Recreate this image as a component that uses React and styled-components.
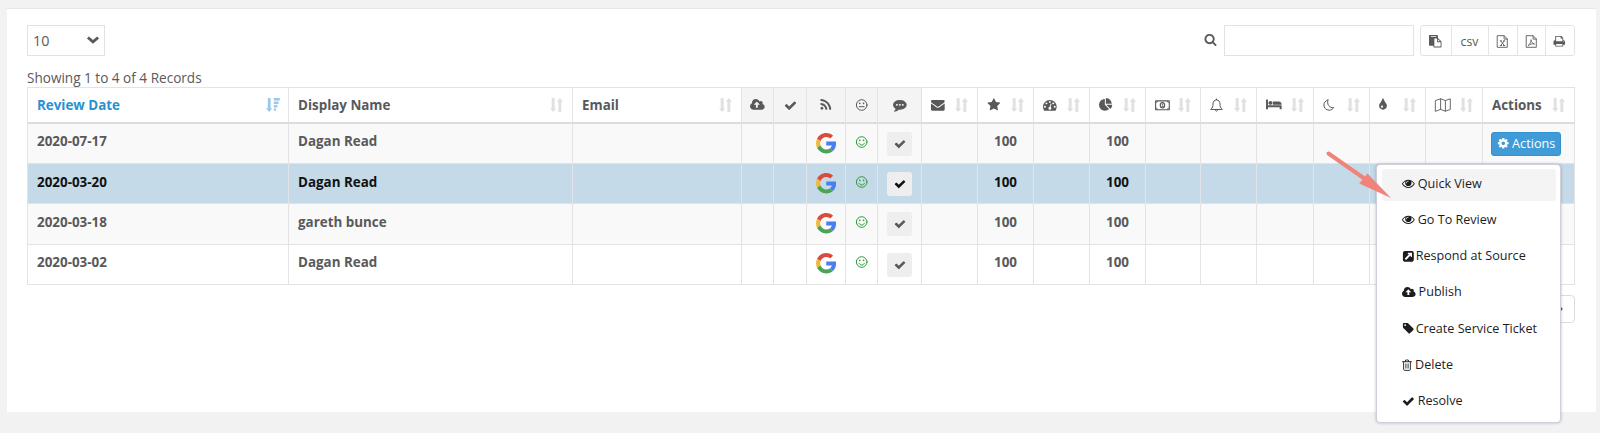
import React from "react";
import styled, { createGlobalStyle, css } from "styled-components";

const GlobalStyle = createGlobalStyle`
  * { box-sizing: border-box; }
  html, body { margin: 0; padding: 0; }
  body {
    background: #f2f2f2;
    color: #58595b;
    font-family: "Open Sans", sans-serif;
    font-size: 13.4px;
    height: 433px;
    overflow: hidden;
  }
`;

/* ---------- icons ---------- */

const PATHS = {
  check: [1792, "M1671 566q0 40-28 68l-724 724-136 136q-28 28-68 28t-68-28l-136-136-362-362q-28-28-28-68t28-68l136-136q28-28 68-28t68 28l294 295 656-657q28-28 68-28t68 28l136 136q28 28 28 68z"],
  cloud: [1920, "M1280 864q0-14-9-23l-352-352q-9-9-23-9t-23 9l-351 351q-10 12-10 24 0 14 9 23t23 9h224v352q0 13 9.5 22.5t22.5 9.5h192q13 0 22.5-9.5t9.5-22.5v-352h224q13 0 22.5-9.5t9.5-22.5zm640 288q0 159-112.5 271.5t-271.5 112.5h-1088q-185 0-316.5-131.5t-131.5-316.5q0-130 70-240t188-165q-2-30-2-43 0-212 150-362t362-150q156 0 285.5 87t188.5 231q71-62 166-62 106 0 181 75t75 181q0 76-41 138 130 31 213.5 135.5t83.5 238.5z"],
  star: [1792, "M1728 647q0 22-26 48l-363 354 86 500q1 7 1 20 0 21-10.5 35.5t-30.5 14.5q-19 0-40-12l-449-236-449 236q-22 12-40 12-21 0-31.5-14.5t-10.5-35.5q0-6 2-20l86-500-364-354q-25-27-25-48 0-37 56-46l502-73 225-455q19-41 49-41t49 41l225 455 502 73q56 9 56 46z"],
  cog: [1792, "M1152 896q0-106-75-181t-181-75-181 75-75 181 75 181 181 75 181-75 75-181zm512-109v222q0 12-8 23t-20 13l-185 28q-19 54-39 91 35 50 107 138 10 12 10 25t-9 23q-27 37-99 108t-94 71q-12 0-26-9l-138-108q-44 23-91 38-16 136-29 186-7 28-36 28h-222q-14 0-24.5-8.5t-11.5-21.5l-28-184q-49-16-90-37l-141 107q-10 9-25 9-14 0-25-11-126-114-165-168-7-10-7-23 0-12 8-23 15-21 51-66.5t54-70.5q-27-50-41-99l-183-27q-13-2-21-12.5t-8-23.5v-222q0-12 8-23t19-13l186-28q14-46 39-92-40-57-107-138-10-12-10-24 0-10 9-23 26-36 98.5-107.5t94.5-71.5q13 0 26 10l138 107q44-23 91-38 16-136 29-186 7-28 36-28h222q14 0 24.5 8.5t11.5 21.5l28 184q49 16 90 37l142-107q9-9 24-9 13 0 25 10 129 119 165 170 7 8 7 22 0 12-8 23-15 21-51 66.5t-54 70.5q26 50 41 98l183 28q13 2 21 12.5t8 23.5z"],
  search: [1792, "M1216 832q0-185-131.5-316.5t-316.5-131.5-316.5 131.5-131.5 316.5 131.5 316.5 316.5 131.5 316.5-131.5 131.5-316.5zm512 832q0 52-38 90t-90 38q-54 0-90-38l-343-342q-179 124-399 124-143 0-273.5-55.5t-225-150-150-225-55.5-273.5 55.5-273.5 150-225 225-150 273.5-55.5 273.5 55.5 225 150 150 225 55.5 273.5q0 220-124 399l343 343q37 37 37 90z"],
  envelope: [1792, "M1792 710v794q0 66-47 113t-113 47h-1472q-66 0-113-47t-47-113v-794q44 49 101 87 362 246 497 345 57 42 92.5 65.5t94.5 48 110 24.5h2q51 0 110-24.5t94.5-48 92.5-65.5q170-123 498-345 57-39 100-87zm0-294q0 79-49 151t-122 123q-376 261-468 325-10 7-42.5 31t-54 38.5-52 32.5-57.5 27-50 9h-2q-23 0-50-9t-57.5-27-52-32.5-54-38.5-42.5-31q-91-64-262-182.5t-205-142.5q-62-42-117-115.5t-55-136.5q0-78 41.5-130t118.5-52h1472q65 0 112.5 47t47.5 113z"],
  rss: [1792, "M576 1344q0 80-56 136t-136 56-136-56-56-136 56-136 136-56 136 56 56 136zm512 123q2 28-17 48-18 21-47 21h-135q-25 0-43-16.5t-20-41.5q-22-229-184.5-391.5t-391.5-184.5q-25-2-41.5-20t-16.5-43v-135q0-29 21-47 17-17 43-17h5q160 13 306 80.5t259 181.5q114 113 181.5 259t80.5 306zm512 2q2 27-18 47-18 20-46 20h-143q-26 0-44.5-17.5t-19.5-42.5q-12-215-101-408.5t-231.5-336-336-231.5-408.5-102q-25-1-42.5-19.5t-17.5-43.5v-143q0-28 20-46 18-18 44-18h3q262 13 501.5 120t425.5 294q187 186 294 425.5t120 501.5z"],
  eye: [1792, "M1664 960q-152-236-381-353 61 104 61 225 0 185-131.5 316.5t-316.5 131.5-316.5-131.5-131.5-316.5q0-121 61-225-229 117-381 353 133 205 333.5 326.5t434.5 121.5 434.5-121.5 333.5-326.5zm-720-384q0-20-14-34t-34-14q-125 0-214.5 89.5t-89.5 214.5q0 20 14 34t34 14 34-14 14-34q0-86 61-147t147-61q20 0 34-14t14-34zm848 384q0 34-20 69-140 230-376.5 368.5t-499.5 138.5-499.5-139-376.5-368q-20-35-20-69t20-69q140-229 376.5-368t499.5-139 499.5 139 376.5 368q20 35 20 69z"],
  tag: [1792, "M576 448q0-53-37.5-90.5t-90.5-37.5-90.5 37.5-37.5 90.5 37.5 90.5 90.5 37.5 90.5-37.5 37.5-90.5zm1067 576q0 53-37 90l-491 492q-39 37-91 37-53 0-90-37l-715-716q-38-37-64.5-101t-26.5-117v-416q0-52 38-90t90-38h416q53 0 117 26.5t102 64.5l715 714q37 39 37 91z"],
  pie: [1792, "M768 890l546 546q-106 108-247.5 168t-298.5 60q-209 0-385.5-103t-279.5-279.5-103-385.5 103-385.5 279.5-279.5 385.5-103v762zm187 6h773q0 157-60 298.5t-168 247.5zm709-128h-768v-768q209 0 385.5 103t279.5 279.5 103 385.5z"],
  dashboard: [1792, "M384 1152q0-53-37.5-90.5t-90.5-37.5-90.5 37.5-37.5 90.5 37.5 90.5 90.5 37.5 90.5-37.5 37.5-90.5zm192-448q0-53-37.5-90.5t-90.5-37.5-90.5 37.5-37.5 90.5 37.5 90.5 90.5 37.5 90.5-37.5 37.5-90.5zm428 481l101-382q6-26-7.5-48.5t-38.5-29.5-48 6.5-30 39.5l-101 382q-60 5-107 43.5t-63 98.5q-20 77 20 146t117 89 146-20 89-117q16-60-6-117t-72-91zm660-33q0-53-37.5-90.5t-90.5-37.5-90.5 37.5-37.5 90.5 37.5 90.5 90.5 37.5 90.5-37.5 37.5-90.5zm-640-640q0-53-37.5-90.5t-90.5-37.5-90.5 37.5-37.5 90.5 37.5 90.5 90.5 37.5 90.5-37.5 37.5-90.5zm448 192q0-53-37.5-90.5t-90.5-37.5-90.5 37.5-37.5 90.5 37.5 90.5 90.5 37.5 90.5-37.5 37.5-90.5zm320 448q0 261-141 483-19 29-54 29h-1402q-35 0-54-29-141-221-141-483 0-182 71-348t191-286 286-191 348-71 348 71 286 191 191 286 71 348z"],
  bed: [2048, "M256 960h1728q26 0 45 19t19 45v448h-256v-256h-1536v256h-256v-1216q0-26 19-45t45-19h128q26 0 45 19t19 45v704zm576-320q0-106-75-181t-181-75-181 75-75 181 75 181 181 75 181-75 75-181zm1216 256v-64q0-159-112.5-271.5t-271.5-112.5h-704q-26 0-45 19t-19 45v384h1152z"],
  tint: [1792, "M896 1152q0-36-20-69-1-1-15.5-22.5t-25.5-38-25-44-21-50.5q-4-16-21-16t-21 16q-7 23-21 50.5t-25 44-25.5 38-15.5 22.5q-20 33-20 69 0 53 37.5 90.5t90.5 37.5 90.5-37.5 37.5-90.5zm512-128q0 212-150 362t-362 150-362-150-150-362q0-145 81-275 6-9 62.5-90.5t101-151 99.5-178 83-201.5q9-30 34-47t51-17 51.5 17 33.5 47q28 93 83 201.5t99.5 178 101 151 62.5 90.5q81 127 81 275z"],
  comment: [1792, "M640 896q0-53-37.5-90.5t-90.5-37.5-90.5 37.5-37.5 90.5 37.5 90.5 90.5 37.5 90.5-37.5 37.5-90.5zm384 0q0-53-37.5-90.5t-90.5-37.5-90.5 37.5-37.5 90.5 37.5 90.5 90.5 37.5 90.5-37.5 37.5-90.5zm384 0q0-53-37.5-90.5t-90.5-37.5-90.5 37.5-37.5 90.5 37.5 90.5 90.5 37.5 90.5-37.5 37.5-90.5zM1792 896q0 174-120 321.5t-326 233-450 85.5q-70 0-145-8-198 175-460 242-49 14-114 22-17 2-30.5-9t-17.5-29v-1q-3-4-.5-12t2-10 4.5-9.5l6-9 7-8.5 8-9q7-8 31-34.5t34.5-38 31-39.5 32.5-51 27-59 26-76q-157-89-247.5-220t-90.5-281q0-130 71-248.5t191-204.5 286-136.5 348-50.5 348 50.5 286 136.5 191 204.5 71 248.5z"],
  external: [1792, "M1408 928v-480q0-26-19-45t-45-19h-480q-42 0-59 39-17 41 14 70l144 144-534 534q-19 19-19 45t19 45l102 102q19 19 45 19t45-19l534-534 144 144q18 19 45 19 12 0 25-5 39-17 39-59zm256-512v960q0 119-84.5 203.5t-203.5 84.5h-960q-119 0-203.5-84.5t-84.5-203.5v-960q0-119 84.5-203.5t203.5-84.5h960q119 0 203.5 84.5t84.5 203.5z"],
  paste: [1792, "M768 1664h896v-640h-416q-40 0-68-28t-28-68v-416h-384v1152zm256-1440v-64q0-13-9.5-22.5t-22.5-9.5h-704q-13 0-22.5 9.5t-9.5 22.5v64q0 13 9.5 22.5t22.5 9.5h704q13 0 22.5-9.5t9.5-22.5zm256 672h299l-299-299v299zm512 128v672q0 40-28 68t-68 28h-960q-40 0-68-28t-28-68v-160h-544q-40 0-68-28t-28-68v-1344q0-40 28-68t68-28h1088q40 0 68 28t28 68v328q21 13 36 28l408 408q28 28 48 76t20 88z"],
  print: [1792, "M448 1536h896v-256h-896v256zm0-640h896v-384h-160q-40 0-68-28t-28-68v-160h-640v640zm1152 64q0-26-19-45t-45-19-45 19-19 45 19 45 45 19 45-19 19-45zm128 0v416q0 13-9.5 22.5t-22.5 9.5h-224v160q0 40-28 68t-68 28h-960q-40 0-68-28t-28-68v-160h-224q-13 0-22.5-9.5t-9.5-22.5v-416q0-79 56.5-135.5t135.5-56.5h64v-544q0-40 28-68t68-28h672q40 0 88 20t76 48l152 152q28 28 48 76t20 88v256h64q79 0 135.5 56.5t56.5 135.5z"],
};

const Svg = styled.svg`
  display: block;
  flex: none;
  overflow: visible;
`;

function Glyph({ name, size = 13.7 }) {
  const [w, d] = PATHS[name];
  return (
    <Svg width={(size * w) / 1792} height={size} viewBox={`0 0 ${w} 1792`} fill="currentColor">
      <path fillRule="evenodd" d={d} />
    </Svg>
  );
}

function Line({ w = 14, h = 14, sw = 1, children }) {
  return (
    <Svg width={w} height={h} viewBox={`0 0 ${w} ${h}`} fill="none" stroke="currentColor"
      strokeWidth={sw} strokeLinecap="round" strokeLinejoin="round">
      {children}
    </Svg>
  );
}

const Face = ({ happy }) => (
  <Line w={12} h={12}>
    <circle cx="5.700" cy="6" r="5.300" />
    <g fill="currentColor" stroke="none">
      <circle cx="3.800" cy="4.400" r="0.800" />
      <circle cx="7.600" cy="4.400" r="0.800" />
    </g>
    {happy ? <path d="M3 7.200c.5 1.200 1.500 1.800 2.700 1.800s2.200-.6 2.700-1.800" /> : <path d="M3.300 7.700h4.800" />}
  </Line>
);

const Money = () => (
  <Line w={15} h={11} sw={1.100}>
    <rect x="0.600" y="0.900" width="13.700" height="8.800" />
    <ellipse cx="7.450" cy="5.300" rx="2.200" ry="2.700" />
    <path d="M7 4.400l.7-.5v2.800M6.800 6.700h1.700" strokeWidth="0.800" />
    <path d="M1.200 2.600q1.400 0 1.400-1.400M13.700 2.600q-1.400 0-1.400-1.400M1.200 8q1.400 0 1.400 1.400M13.700 8q-1.400 0-1.400 1.400" strokeWidth="0.800" />
  </Line>
);

const Bell = () => (
  <Line w={13} h={14}>
    <path d="M6.500 1v.7M1 11.200c1.600-1.400 2-3 2-5.200C3 3.600 4.300 1.900 6.500 1.900S10 3.600 10 6c0 2.200.4 3.800 2 5.200z" />
    <path d="M5.200 11.800c.1.800.6 1.300 1.300 1.300s1.200-.5 1.300-1.300" />
  </Line>
);

const Moon = () => (
  <Line w={12} h={12}>
    <path d="M4.900 1C2.500 1.600.9 3.600.9 6c0 2.900 2.300 5.200 5.200 5.200 2 0 3.700-1 4.600-2.700-3.900.9-7.200-3-5.800-7.500z" />
  </Line>
);

const MapIcon = () => (
  <Line w={16} h={14}>
    <path d="M.7 2.500l4.900-1.700 4.800 1.700L15.300.8v10.600l-4.900 1.800-4.800-1.800-4.900 1.800zM5.600.8v10.600M10.400 2.500v10.700" strokeWidth="0.900" />
  </Line>
);

const Trash = () => (
  <Line w={10} h={12}>
    <path d="M.5 2.700h9M1.600 2.900v7.300c0 .7.400 1.200 1 1.200h4.800c.6 0 1-.5 1-1.200V2.900M3.200 2.500l.5-1.500h2.600l.5 1.500M3.900 4.900v4.300M6.100 4.900v4.300" strokeWidth="0.900" />
  </Line>
);

const Sheet = ({ children }) => (
  <Line w={11} h={13} sw={0.900}>
    <path d="M.6.7h6.600l3.100 3.200v8.400H.6zM7.100.9v3.200h3.100" strokeLinejoin="miter" />
    {children}
  </Line>
);

const Chevron = () => (
  <Line w={12} h={8} sw={2.800}>
    <path d="M.9 1.500L6 5.900l5.100-4.400" strokeLinecap="butt" strokeLinejoin="miter" />
  </Line>
);

const TintIcon = () => (
  <Svg width="8" height="13.700" viewBox="384 0 1024 1792" fill="currentColor">
    <path fillRule="evenodd" d={PATHS.tint[1]} />
  </Svg>
);

const SortBoth = () => (
  <Svg width="13" height="14" viewBox="0 0 13 14" fill="currentColor">
    <path d="M1.700 0h2.900v10.200h1.800L3.200 14 0 10.200h1.700zM8.400 14h2.900V3.800H13L9.900 0 6.700 3.800h1.700z" />
  </Svg>
);

const SortDesc = () => (
  <Svg width="14" height="14" viewBox="0 0 14 14" fill="currentColor">
    <path d="M1.800 0h2.800v10.200h1.700L3.200 13.900 0 10.200h1.800zM7.800 0h6v2.600h-6zM7.800 3.500h4.800v2.600H7.800zM7.800 7h3.600v2.500H7.800zM7.800 10.400h2.200v2.400H7.800z" />
  </Svg>
);

const GoogleLogo = () => (
  <Svg width="20.500" height="20.500" viewBox="0 0 48 48">
    <path fill="#d94b3d" d="M24 9.500c3.540 0 6.710 1.220 9.210 3.600l6.850-6.850C35.900 2.380 30.470 0 24 0 14.620 0 6.510 5.380 2.560 13.220l7.980 6.190C12.430 13.720 17.740 9.500 24 9.500z" />
    <path fill="#4a80ee" d="M46.980 24.550c0-1.570-.15-3.090-.38-4.550H24v9.020h12.940c-.58 2.960-2.260 5.480-4.780 7.180l7.730 6c4.510-4.180 7.090-10.360 7.090-17.650z" />
    <path fill="#f2b936" d="M10.530 28.590c-.48-1.450-.76-2.990-.76-4.590s.27-3.140.76-4.590l-7.980-6.190C.92 16.460 0 20.120 0 24c0 3.880.92 7.540 2.560 10.780l7.970-6.190z" />
    <path fill="#4da352" d="M24 48c6.480 0 11.930-2.130 15.890-5.810l-7.730-6c-2.150 1.450-4.920 2.300-8.160 2.300-6.260 0-11.570-4.220-13.470-9.910l-7.980 6.190C6.510 42.620 14.620 48 24 48z" />
  </Svg>
);

/* ---------- layout ---------- */

const Panel = styled.main`
  position: relative;
  width: 1589px;
  height: 404px;
  margin: 8px 0 0 7px;
  padding: 16px 21px 0 20px;
  background: #fff;
  border-top: 1px solid #e7e7e7;
`;

const Toolbar = styled.div`
  display: flex;
  align-items: center;
  height: 31px;
`;

const PageSize = styled.button`
  display: flex;
  align-items: center;
  justify-content: space-between;
  width: 78px;
  height: 31px;
  padding: 0 5px 1px 5px;
  border: 1px solid #e2e2e4;
  background: #fff;
  color: inherit;
  font: 14.3px "Open Sans", sans-serif;
`;

const SearchGroup = styled.label`
  display: flex;
  align-items: center;
  gap: 7px;
  margin-left: auto;
`;

const SearchMark = styled.span`
  padding-bottom: 2px;
`;

const SearchInput = styled.input`
  width: 190px;
  height: 31px;
  border: 1px solid #e2e2e4;
  background: #fff;
`;

const ExportGroup = styled.div`
  display: flex;
  height: 31px;
  margin-left: 6px;
  border: 1px solid #e2e2e4;
  border-radius: 3px;
`;

const ExportButton = styled.button`
  display: flex;
  align-items: center;
  justify-content: center;
  width: ${(p) => p.$width}px;
  padding: 1px 1px 0 0;
  border: 0;
  background: none;
  color: inherit;
  font: 12.3px "Open Sans", sans-serif;
  & + & { border-left: 1px solid #e4e4e8; }
`;

const Summary = styled.div`
  height: 31px;
  padding-top: 12px;
  line-height: 20px;
  font-size: 13.57px;
`;

const Table = styled.table`
  width: 1548px;
  table-layout: fixed;
  border-collapse: separate;
  border-spacing: 0;
  border: solid #e3e3e5;
  border-width: 1px 0 0 1px;
`;

const HeadCell = styled.th`
  height: 36px;
  padding: 0 9px;
  background: ${(p) => (p.$muted ? "#f4f4f4" : "#fff")};
  color: ${(p) => (p.$active ? "#2b90d0" : "inherit")};
  border-right: 1px solid #e3e3e5;
  border-bottom: 2px solid #dcdcde;
  font-weight: 700;
`;

const HeadContent = styled.div`
  display: flex;
  align-items: center;
  justify-content: ${(p) => (p.$center ? "center" : "space-between")};
  height: 34px;
  white-space: nowrap;
`;

const SortMark = styled.span`
  color: ${(p) => (p.$active ? "#98c9ea" : "#e0e0e1")};
  margin-right: ${(p) => (p.$active ? "-1px" : "0")};
`;

const Row = styled.tr`
  height: ${(p) => p.$height}px;
  background: ${(p) => p.$bg};
  ${(p) => p.$selected && css`color: #111;`}
`;

const Cell = styled.td`
  padding: 0 0 0 9px;
  vertical-align: top;
  border-right: 1px solid #e3e3e5;
  border-bottom: 1px solid #e3e3e5;
  font-weight: 700;
  line-height: ${(p) => p.$line}px;
`;

const Centered = styled.div`
  display: flex;
  justify-content: center;
  padding-top: ${(p) => p.$top}px;
  margin-left: -9px;
`;

const Happy = styled.span`
  color: #2f9a38;
`;

const CheckButton = styled.button`
  display: flex;
  align-items: center;
  justify-content: center;
  width: 25px;
  height: 24px;
  padding: 0;
  border: 0;
  border-radius: 3px;
  background: #eee;
  color: inherit;
`;

const ActionWrap = styled.div`
  position: relative;
  width: 70px;
  margin: 8px 0 0 -1px;
`;

const ActionButton = styled.button`
  display: flex;
  align-items: center;
  justify-content: center;
  gap: 3px;
  width: 70px;
  height: 24px;
  padding: 0 0 2px;
  border: 1px solid #3290ce;
  border-radius: 3px;
  background: #409bd7;
  color: #fff;
  font: 12.7px "Open Sans", sans-serif;
`;

const Menu = styled.ul`
  position: absolute;
  z-index: 2;
  top: 32px;
  right: 0;
  width: 185px;
  height: 259px;
  margin: 0;
  padding: 4px 4px 4px 5px;
  list-style: none;
  background: #fff;
  border: 1px solid #cfcfda;
  border-radius: 4px;
  box-shadow: 0 0 3px rgba(60, 60, 110, 0.35);
`;

const MenuItem = styled.li`
  display: flex;
  align-items: center;
  gap: ${(p) => p.$gap}px;
  height: 32px;
  margin-bottom: 4.3px;
  padding: 0 0 3px 20px;
  border-radius: 3px;
  background: ${(p) => (p.$active ? "#f4f4f4" : "none")};
  color: #1d1d1f;
  font-size: 12.6px;
  font-weight: 400;
  line-height: 20px;
  white-space: nowrap;
`;

const Pager = styled.div`
  display: flex;
  justify-content: flex-end;
  padding-top: 10px;
`;

const PagerButton = styled.button`
  display: flex;
  align-items: center;
  justify-content: center;
  width: 32px;
  height: 28px;
  padding: 0;
  border: 1px solid #dcdce0;
  border-radius: 4px;
  background: #fff;
  color: #58595b;
`;

const Pointer = styled.svg`
  position: absolute;
  z-index: 3;
  left: 1317px;
  top: 139px;
`;

/* ---------- data ---------- */

const COLUMNS = [
  { w: 261, label: "Review Date", sort: true, active: true },
  { w: 284, label: "Display Name", sort: true },
  { w: 169, label: "Email", sort: true },
  { w: 32, icon: <Glyph name="cloud" />, muted: true },
  { w: 33, icon: <Glyph name="check" size={13} />, muted: true },
  { w: 39, icon: <Glyph name="rss" />, muted: true },
  { w: 32, icon: <Face />, muted: true },
  { w: 44, icon: <Glyph name="comment" />, muted: true },
  { w: 56, icon: <Glyph name="envelope" />, sort: true },
  { w: 56, icon: <Glyph name="star" />, sort: true },
  { w: 56, icon: <Glyph name="dashboard" />, sort: true },
  { w: 56, icon: <Glyph name="pie" />, sort: true },
  { w: 55, icon: <Money />, sort: true },
  { w: 56, icon: <Bell />, sort: true },
  { w: 57, icon: <Glyph name="bed" />, sort: true },
  { w: 56, icon: <Moon />, sort: true },
  { w: 56, icon: <TintIcon />, sort: true },
  { w: 57, icon: <MapIcon />, sort: true },
  { w: 92, label: "Actions", sort: true },
];

const ROWS = [
  { date: "2020-07-17", name: "Dagan Read", height: 40, line: 35, icon: 8, bg: "#f9f9f9", menu: true },
  { date: "2020-03-20", name: "Dagan Read", height: 40, line: 36, icon: 8, bg: "#c4dae8", selected: true },
  { date: "2020-03-18", name: "gareth bunce", height: 41, line: 37, icon: 8, bg: "#f9f9f9" },
  { date: "2020-03-02", name: "Dagan Read", height: 40, line: 35, icon: 7.5, bg: "#fff" },
];

const MENU = [
  { label: "Quick View", icon: <Glyph name="eye" size={12.7} />, gap: 3, active: true },
  { label: "Go To Review", icon: <Glyph name="eye" size={12.7} />, gap: 3 },
  { label: "Respond at Source", icon: <Glyph name="external" size={12.7} />, gap: 1 },
  { label: "Publish", icon: <Glyph name="cloud" size={12.7} />, gap: 3 },
  { label: "Create Service Ticket", icon: <Glyph name="tag" size={12.7} />, gap: 1 },
  { label: "Delete", icon: <Trash />, gap: 3 },
  { label: "Resolve", icon: <Glyph name="check" size={12.7} />, gap: 3 },
];

function ActionsMenu() {
  return (
    <ActionWrap>
      <ActionButton>
        <Glyph name="cog" size={12.5} />
        Actions
      </ActionButton>
      <Menu>
        {MENU.map((m) => (
          <MenuItem key={m.label} $gap={m.gap} $active={m.active}>
            {m.icon}
            {m.label}
          </MenuItem>
        ))}
      </Menu>
    </ActionWrap>
  );
}

function ReviewRow({ row }) {
  const cells = {
    0: row.date,
    1: row.name,
    5: <Centered $top={row.icon + 0.5}><GoogleLogo /></Centered>,
    6: <Centered $top={row.icon + 3.5}><Happy><Face happy /></Happy></Centered>,
    7: <Centered $top={row.icon}><CheckButton><Glyph name="check" size={12} /></CheckButton></Centered>,
    9: <Centered $top={0}>100</Centered>,
    11: <Centered $top={0}>100</Centered>,
    18: row.menu ? <ActionsMenu /> : null,
  };
  return (
    <Row $height={row.height} $bg={row.bg} $selected={row.selected}>
      {COLUMNS.map((c, i) => <Cell key={i} $line={row.line}>{cells[i]}</Cell>)}
    </Row>
  );
}

export default function App() {
  return (
    <>
      <GlobalStyle />
      <Panel>
        <Toolbar>
          <PageSize>10<Chevron /></PageSize>
          <SearchGroup>
            <SearchMark><Glyph name="search" size={13} /></SearchMark>
            <SearchInput />
          </SearchGroup>
          <ExportGroup>
            <ExportButton $width={30}><Glyph name="paste" size={12.5} /></ExportButton>
            <ExportButton $width={37}>csv</ExportButton>
            <ExportButton $width={29}>
              <Sheet>
                <path d="M3.800 5.900l3.400 4.600M7.200 5.900l-3.400 4.600M3.300 5.900h1.300M6.400 5.900h1.300M3.300 10.500h1.300M6.400 10.500h1.300" />
              </Sheet>
            </ExportButton>
            <ExportButton $width={28}>
              <Sheet>
                <path d="M2.300 10.500C3.800 9.500 5.100 7 5 4.600C5.300 7.200 6.400 8.600 8.600 9C6.600 8.500 4.300 9 2.300 10.500" strokeWidth="0.800" />
              </Sheet>
            </ExportButton>
            <ExportButton $width={29}><Glyph name="print" size={12.5} /></ExportButton>
          </ExportGroup>
        </Toolbar>
        <Summary>Showing 1 to 4 of 4 Records</Summary>
        <Table>
          <colgroup>
            {COLUMNS.map((c, i) => <col key={i} width={c.w} />)}
          </colgroup>
          <thead>
            <tr>
              {COLUMNS.map((c, i) => (
                <HeadCell key={i} $muted={c.muted} $active={c.active}>
                  <HeadContent $center={!c.sort}>
                    {c.label || c.icon}
                    {c.sort && (
                      <SortMark $active={c.active}>{c.active ? <SortDesc /> : <SortBoth />}</SortMark>
                    )}
                  </HeadContent>
                </HeadCell>
              ))}
            </tr>
          </thead>
          <tbody>
            {ROWS.map((r) => <ReviewRow key={r.date} row={r} />)}
          </tbody>
        </Table>
        <Pager>
          <PagerButton>
            <Line w={6} h={10} sw={1.4}><path d="M2.500 1.500L6 5 2.500 8.500" /></Line>
          </PagerButton>
        </Pager>
        <Pointer width="70" height="54" viewBox="0 0 70 54">
          <path d="M4.500 5.500L41 31" stroke="#f0847b" strokeWidth="4" strokeLinecap="round" />
          <path d="M43.500 25.500L67 50 35.200 35.500z" fill="#f0847b" />
        </Pointer>
      </Panel>
    </>
  );
}
